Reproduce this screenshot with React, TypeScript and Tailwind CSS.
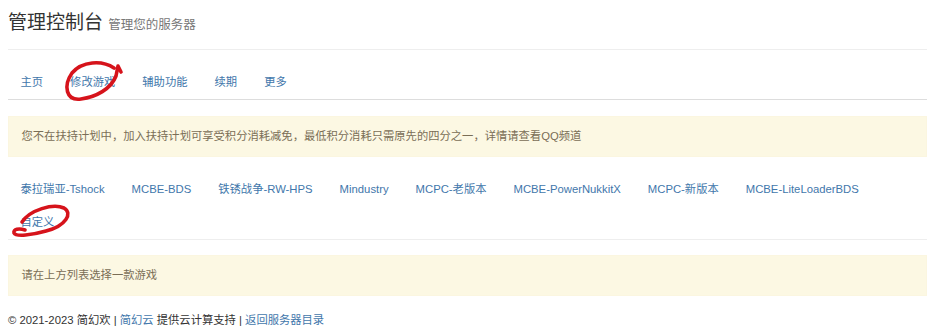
const tabs = ["主页", "修改游戏", "辅助功能", "续期", "更多"];

const games = [
  "泰拉瑞亚-Tshock",
  "MCBE-BDS",
  "铁锈战争-RW-HPS",
  "Mindustry",
  "MCPC-老版本",
  "MCBE-PowerNukkitX",
  "MCPC-新版本",
  "MCBE-LiteLoaderBDS",
];

// hand-drawn red marks from the screenshot
function Scribbles() {
  return (
    <svg
      className="pointer-events-none absolute left-0 top-0"
      width="942"
      height="336"
      viewBox="0 0 942 336"
      fill="none"
    >
      <path
        d="M114 68 C102 60 82 61 72 73 C63 86 66 101 81 99 C96 97 111 89 116 76 L118 66 L121 72"
        stroke="#d6131b"
        strokeWidth="3.6"
        strokeLinecap="round"
        strokeLinejoin="round"
      />
      <path
        d="M22 222 C30 210 53 203 64 208 C73 213 66 226 46 231 C32 235 16 237 14 233 C13 229 19 228 25 230"
        stroke="#d6131b"
        strokeWidth="3.6"
        strokeLinecap="round"
        strokeLinejoin="round"
      />
    </svg>
  );
}

export default function App() {
  return (
    <div
      className="relative w-[942px] h-[336px] overflow-hidden bg-white pl-[8px] pr-[15px] text-[11.3px] leading-[16.5px] text-[#333]"
      style={{ fontFamily: '"Liberation Sans", Arial, "Noto Sans CJK SC", sans-serif' }}
    >
      <div className="h-[50px] pt-[12px] border-b border-[#eee]">
        <h1 className="leading-[22px] text-[19px] font-normal text-[#333]">
          管理控制台 <small className="text-[12.5px] text-[#777]">管理您的服务器</small>
        </h1>
      </div>

      <ul className="mt-[16px] flex border-b border-[#ddd]">
        {tabs.map((t) => (
          <li key={t} className="mr-[2px]">
            <a className="block px-[12.5px] py-[8.25px] text-[#4277ab]">{t}</a>
          </li>
        ))}
      </ul>

      <div className="mt-[16px] px-[12.5px] py-[11.25px] bg-[#fcf8e3] border border-[#fbf6e0] text-[#7a6e56]">
        您不在扶持计划中，加入扶持计划可享受积分消耗减免，最低积分消耗只需原先的四分之一，详情请查看QQ频道
      </div>

      <ul className="mt-[16px] flex flex-wrap border-b border-[#eee]">
        {games.map((g) => (
          <li key={g} className="mr-[2px]">
            <a className="block px-[12.5px] py-[8.25px] text-[#4277ab]">{g}</a>
          </li>
        ))}
        <li className="basis-full h-0" />
        <li className="mr-[2px]">
          <a className="block px-[12.5px] py-[8.25px] text-[#4277ab]">自定义</a>
        </li>
      </ul>

      <div className="mt-[15px] px-[12.5px] py-[11.25px] bg-[#fcf8e3] border border-[#fbf6e0] text-[#7a6e56]">
        请在上方列表选择一款游戏
      </div>

      <footer className="mt-[16px] text-[#333]">
        © 2021-2023 简幻欢 | <a className="text-[#4277ab]">简幻云</a> 提供云计算支持 |{" "}
        <a className="text-[#4277ab]">返回服务器目录</a>
      </footer>

      <Scribbles />
    </div>
  );
}
